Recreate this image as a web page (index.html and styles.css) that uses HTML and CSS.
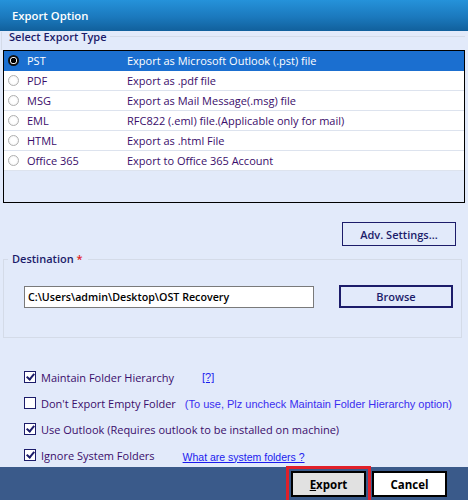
FILE: index.html
```html
<!DOCTYPE html>
<html>
<head>
<meta charset="utf-8">
<link rel="stylesheet" href="styles.css">
</head>
<body>
<div class="window">
  <div class="titlebar">Export Option</div>

  <div class="group type-group">
    <div class="legend-row"><span class="legend">Select Export Type</span><span class="legend-line"></span></div>
    <div class="listbox">
      <div class="row selected"><span class="radio on"></span><span class="fmt">PST</span><span class="desc">Export as Microsoft Outlook (.pst) file</span></div>
      <div class="row"><span class="radio"></span><span class="fmt">PDF</span><span class="desc">Export as .pdf file</span></div>
      <div class="row"><span class="radio"></span><span class="fmt">MSG</span><span class="desc">Export as Mail Message(.msg) file</span></div>
      <div class="row"><span class="radio"></span><span class="fmt">EML</span><span class="desc">RFC822 (.eml) file.(Applicable only for mail)</span></div>
      <div class="row"><span class="radio"></span><span class="fmt">HTML</span><span class="desc">Export as .html File</span></div>
      <div class="row"><span class="radio"></span><span class="fmt">Office 365</span><span class="desc">Export to Office 365 Account</span></div>
    </div>
  </div>

  <div class="adv-row"><button class="btn adv">Adv. Settings...</button></div>

  <div class="dest">
    <div class="dest-legend">Destination <span class="req">*</span></div>
    <div class="dest-body">
      <div class="path">C:\Users\admin\Desktop\OST Recovery</div>
      <button class="btn browse">Browse</button>
    </div>
  </div>

  <div class="options">
    <div class="opt"><span class="check on"></span><span class="opt-label">Maintain Folder Hierarchy</span><a class="help">[?]</a></div>
    <div class="opt"><span class="check"></span><span class="opt-label">Don't Export Empty Folder</span><span class="note">(To use, Plz uncheck Maintain Folder Hierarchy option)</span></div>
    <div class="opt"><span class="check on"></span><span class="opt-label">Use Outlook (Requires outlook to be installed on machine)</span></div>
    <div class="opt"><span class="check on"></span><span class="opt-label">Ignore System Folders</span><a class="sys-link">What are system folders ?</a></div>
  </div>

  <div class="footer">
    <div class="export-wrap"><button class="fbtn export"><u>E</u>xport</button></div>
    <button class="fbtn cancel">Cancel</button>
  </div>
</div>
</body>
</html>
```

FILE: styles.css
```css
html, body {
  margin: 0;
  padding: 0;
}
body {
  width: 468px;
  height: 500px;
  overflow: hidden;
  background: #e2eafa;
  font-family: "Open Sans", "Noto Sans", sans-serif;
  font-size: 11px;
}
.window {
  display: flex;
  flex-direction: column;
  height: 500px;
}
.titlebar {
  height: 31px;
  line-height: 31px;
  padding-left: 12px;
  color: #fff;
  font-size: 11.3px;
  font-weight: 600;
  background: linear-gradient(#2592da, #1b79bd 55%, #11609c);
  flex: none;
}
.type-group {
  padding: 0 3px 0 3px;
}
.legend-row {
  display: flex;
  align-items: center;
  height: 18px;
  border-left: 1px solid #d4dbe8;
  margin-left: -2px;
  margin-top: 1px;
}
.legend {
  color: #1c1c6a;
  font-weight: 600;
  font-size: 11px;
  padding: 0 4px 0 7px;
  margin-top: -9px;
}
.legend-line {
  flex: 1;
  height: 1px;
  background: #d4dbe8;
  margin-top: -9px;
}
.listbox {
  border: 1px solid #000;
  height: 151px;
  background: #e2eafa;
  width: 460px;
}
.row {
  display: flex;
  align-items: center;
  height: 19px;
  border-bottom: 1px solid #dde3ee;
  background: #fff;
  color: #3a0d6a;
}
.row.selected {
  background: #1b6fd0;
  color: #fff;
  border-bottom-color: #1b6fd0;
}
.radio {
  width: 11px;
  height: 11px;
  box-sizing: border-box;
  border-radius: 50%;
  border: 1px solid #b0b0b0;
  background: radial-gradient(circle, #fff 40%, #ececec 100%);
  margin-left: 4px;
  flex: none;
}
.radio.on {
  border: 2px solid #111;
  background: radial-gradient(circle, #000 0 2.5px, #fff 3px);
}
.fmt {
  width: 100px;
  margin-left: 8px;
  flex: none;
}
.desc {
  white-space: nowrap;
}
.adv-row {
  display: flex;
  justify-content: flex-end;
  padding: 19px 12px 0 0;
}
.btn {
  font-family: "Open Sans", "Noto Sans", sans-serif;
  font-weight: 600;
  color: #1c1c6a;
  font-size: 11px;
  background: #e2eafa;
  padding: 0;
}
.adv {
  width: 114px;
  height: 24px;
  border: 1px solid #1c1c6a;
}
.dest {
  margin: 13px 6px 0 3px;
  border: 1px solid #d4dbe8;
  height: 77px;
}
.dest-legend {
  display: inline-block;
  background: #e2eafa;
  color: #1c1c6a;
  font-weight: 600;
  padding: 0 5px 0 4px;
  margin: -8px 0 0 4px;
  line-height: 14px;
  vertical-align: top;
}
.req {
  color: #e02020;
}
.dest-body {
  display: flex;
  align-items: center;
  margin-top: 10px;
  padding-left: 20px;
}
.path {
  width: 285px;
  height: 20px;
  line-height: 20px;
  border: 1px solid #7a7a7a;
  background: #fff;
  padding-left: 3px;
  color: #000;
  font-weight: 600;
  font-size: 10.7px;
  white-space: nowrap;
}
.browse {
  margin-left: 25px;
  width: 114px;
  height: 23px;
  border: 2px solid #1c1c6a;
}
.options {
  flex: 1;
  padding: 31px 0 0 24px;
  display: flex;
  flex-direction: column;
  gap: 10px;
}
.opt {
  display: flex;
  align-items: center;
  height: 16px;
  color: #3a0d6a;
  white-space: nowrap;
}
.check {
  width: 12px;
  height: 12px;
  box-sizing: border-box;
  border: 1px solid #1c1c6a;
  background: #fff;
  flex: none;
  position: relative;
}
.check.on::after {
  content: "";
  position: absolute;
  left: 3px;
  top: 0px;
  width: 3px;
  height: 6px;
  border: solid #1c1c6a;
  border-width: 0 2px 2px 0;
  transform: rotate(40deg);
}
.opt-label {
  margin-left: 5px;
}
.help {
  margin-left: 28px;
  color: #1a1aee;
  text-decoration: underline;
  font-family: "Liberation Sans", Arial, sans-serif;
  font-size: 11px;
}
.note {
  margin-left: 9px;
  color: #3a2ef0;
  font-family: "Liberation Sans", Arial, sans-serif;
  font-size: 11px;
  margin-top: 2px;
}
.sys-link {
  margin-left: 28px;
  color: #1a1aee;
  text-decoration: underline;
  font-family: "Liberation Sans", Arial, sans-serif;
  font-size: 10.5px;
  margin-top: 3px;
}
.footer {
  flex: none;
  height: 33px;
  background: #3a5a8a;
  display: flex;
  align-items: flex-start;
  padding-left: 286px;
}
.export-wrap {
  border: 3px solid #e0202a;
  border-bottom: none;
  padding: 2px 2px 0 2px;
  height: 31px;
  margin-top: -1px;
}
.fbtn {
  font-family: "Open Sans", "Noto Sans", sans-serif;
  font-weight: 700;
  font-size: 11.5px;
  color: #000;
  width: 75px;
  height: 26px;
  border: 2px solid #000;
  padding: 0;
}
.export {
  background: #e1e1e1;
}
.cancel {
  background: #fff;
  margin-top: 4px;
  margin-left: 1px;
}
```
